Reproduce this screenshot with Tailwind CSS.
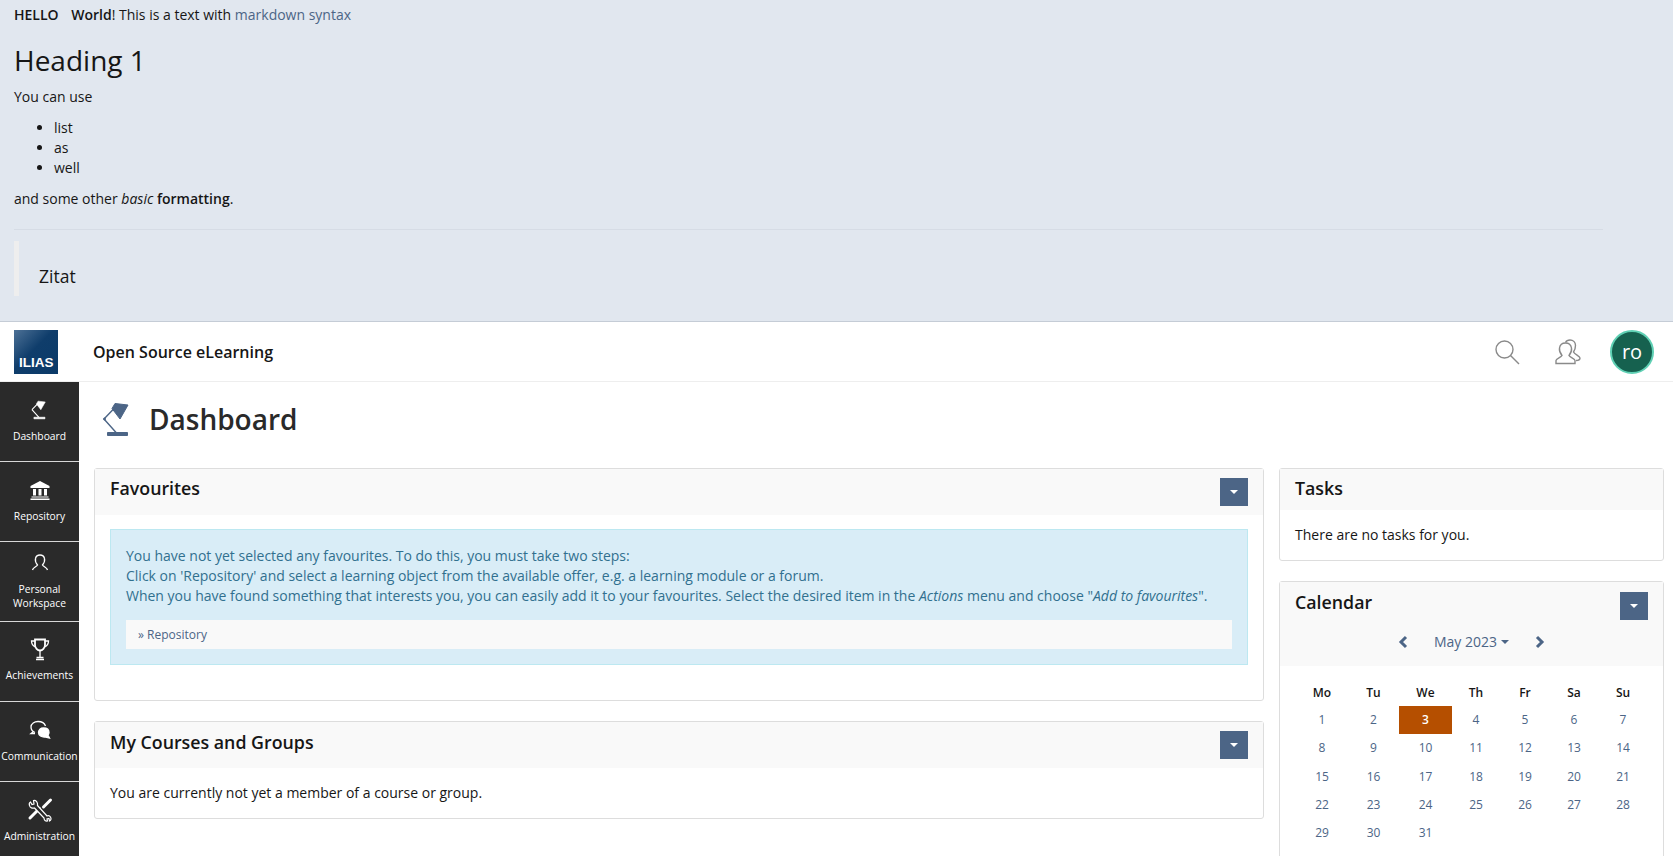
<!DOCTYPE html>
<html lang="en">
<head>
	<meta charset="UTF-8">
	<title>ILIAS Dashboard</title>
	<script src="https://cdn.jsdelivr.net/npm/@tailwindcss/browser@4"></script>
</head>
<body class="h-[856px] overflow-hidden bg-white font-['Open_Sans',sans-serif] text-[14px] leading-[20px] text-[#161616]">
	<!-- Markdown banner -->
	<section class="h-[322px] border-b border-[#c5ccd6] bg-[#e1e7ef] pl-[14px] pr-[70px] pt-[5px]">
		<p><b class="font-semibold mr-[9px]">HELLO</b> <b class="font-semibold">World</b>! This is a text with <a class="text-[#4c6586]">markdown syntax</a></p>
		<h1 class="mt-[19px] text-[28px] leading-[32px]">Heading 1</h1>
		<p class="mt-[11px]">You can use</p>
		<ul class="mt-[11px] list-disc pl-[40px]">
			<li>list</li>
			<li>as</li>
			<li>well</li>
		</ul>
		<p class="mt-[11px]">and some other <i>basic</i> <b class="font-semibold">formatting</b>.</p>
		<hr class="mt-[20px] border-[#d6dce5]">
		<blockquote class="mt-[11px] flex h-[55px] items-end border-l-[5px] border-[#eeeeee] pb-[8px] pl-[20px] text-[17.5px] leading-[24px]">Zitat</blockquote>
	</section>

	<!-- Top bar -->
	<header class="flex h-[60px] items-center border-b border-[#eeeeee] pl-[14px] pr-[19px]">
		<div class="relative h-[44px] w-[44px] bg-[linear-gradient(135deg,#4d7196_0%,#0f3d6b_45%,#0b3a68_100%)]">
			<span class="absolute bottom-[3px] left-[5px] font-['Liberation_Sans',sans-serif] text-[13.5px] font-bold leading-[16px] text-white">ILIAS</span>
		</div>
		<span class="ml-[35px] text-[16px] font-semibold">Open Source eLearning</span>
		<div class="ml-auto flex items-center">
			<svg class="h-[26px] w-[26px]" viewBox="0 0 26 26" fill="none" stroke="#8a8a8a" stroke-width="1.4"><circle cx="10.5" cy="10.5" r="8.5"/><path d="M16.5 16.5 L25 25"/></svg>
			<svg class="ml-[35px] h-[26px] w-[27px]" viewBox="0 0 27 26" fill="none" stroke="#8a8a8a" stroke-width="1.4"><path d="M1 24.5 V21.5 C1 19.5 6 18.5 7 16.5 C5 14 4 12 4.500 9 C5 5.500 8 4 10.500 4 C13.500 4 16 6 16.500 9 C17 12 16 14 14 16.500 C15 18.500 20 19.500 20 21.500 V24.500 Z"/><path d="M10.500 3.500 C11.500 1.500 13.500 1 15 1 C18 1 20.500 3 20.500 6.500 C20.500 9.500 19.500 11.500 18.500 13 C19.500 15.500 25 17 25 19 C25 21 23 21.500 21 21.500"/></svg>
			<div class="ml-[28px] flex h-[44px] w-[44px] items-center justify-center rounded-full border-2 border-[#5fd0b4] bg-[#16614f] text-[20px] text-white">ro</div>
		</div>
	</header>

	<div class="flex h-[474px]">
		<!-- Sidebar -->
		<nav class="w-[79px] shrink-0 overflow-hidden bg-[#2a2a2a] text-center text-[10.3px] leading-[14px] text-white">
			<a class="flex h-[80px] flex-col items-center justify-center border-b border-[#d8d8d8] pb-[4px]">
				<svg class="mb-[6px] h-[26px] w-[26px]" viewBox="-6 -5 43 47" fill="#ffffff" stroke="#ffffff"><path d="M12 2.500 L25 4 L17 18 L9 7.500 Z"/><path d="M1 18 L12 6.500 M1 18 L13.500 32" fill="none" stroke-width="2"/><path d="M4.500 31.500 H24.500 V34.500 H4.500 Z"/></svg>
				Dashboard
			</a>
			<a class="flex h-[80px] flex-col items-center justify-center border-b border-[#d8d8d8] pb-[4px]">
				<svg class="mb-[6px] h-[26px] w-[26px]" viewBox="0 0 26 26" fill="#ffffff"><path d="M13 4 L22.500 9 V11 H3.500 V9 Z"/><path d="M6 12 H9 V18.500 H6 Z M11.500 12 H14.500 V18.500 H11.500 Z M17 12 H20 V18.500 H17 Z M4.500 19.500 H21.500 V20.500 H4.500 Z M3.500 21.500 H22.500 V23 H3.500 Z"/></svg>
				Repository
			</a>
			<a class="flex h-[80px] flex-col items-center justify-center border-b border-[#d8d8d8] pb-[4px]">
				<svg class="mb-[6px] h-[26px] w-[26px]" viewBox="0 0 26 26" fill="none" stroke="#ffffff" stroke-width="1.300"><path d="M5.500 20 C6 17.500 9.500 17 10.500 15 C8.500 12.500 8 10.500 8.500 8.500 C9 6 11 5 13 5 C15 5 17 6 17.500 8.500 C18 10.500 17.500 12.500 15.500 15 C16.500 17 20 17.500 20.500 20"/></svg>
				Personal<br>Workspace
			</a>
			<a class="flex h-[80px] flex-col items-center justify-center border-b border-[#d8d8d8] pb-[5px]">
				<svg class="mb-[6px] h-[26px] w-[26px]" viewBox="0 0 26 26" fill="none" stroke="#ffffff" stroke-width="1.300"><path d="M8 3.500 H18 V9 C18 12 15.500 14.500 13 14.500 C10.500 14.500 8 12 8 9 Z" stroke-width="1.800"/><path d="M8 5 H4.500 C4.500 8.500 6 10 8.500 11 M18 5 H21.500 C21.500 8.500 20 10 17.500 11 M13 14.500 V21 M9.500 21.500 H16.500 M9 23.500 H17"/></svg>
				Achievements
			</a>
			<a class="flex h-[80px] flex-col items-center justify-center border-b border-[#d8d8d8] pb-[4px]">
				<svg class="mb-[6px] h-[26px] w-[26px]" viewBox="0 0 26 26" fill="none" stroke="#ffffff" stroke-width="1.300"><path d="M8 15.500 C5.500 14.500 4 12.500 4 10 C4 6.500 7.500 4.500 11 4.500 C14.500 4.500 17.500 6 18.500 9"/><path d="M6.500 14.500 L4 16.500 L8 16.500"/><path d="M16.500 11 C19.500 11 22 12.500 22 15.500 C22 16.500 21.500 17.500 21 18 L22.500 21 L18.500 20 C14.500 20.500 11.500 18.500 11.500 15.500 C11.500 13 13.500 11 16.500 11 Z" fill="#ffffff"/></svg>
				Communication
			</a>
			<a class="flex h-[80px] flex-col items-center justify-center pb-[5px]">
				<svg class="mb-[6px] h-[26px] w-[26px]" viewBox="0 0 26 26" fill="none" stroke="#ffffff"><path d="M16.500 10 L23.500 3" stroke-width="3" stroke-linecap="round"/><path d="M3 21 L12.500 11.500" stroke-width="3" stroke-linecap="round"/><path d="M10.500 8.500 L20 19 C21 18.500 22.500 18.500 23.500 20 C24.500 21.500 24 23.500 22.500 24 L22 21.500 L20 22 L20.500 24 C18.500 24.500 17 23 17 21 L7.500 11 C5.500 11.500 3 11 2.500 8.500 C2 7 2.500 5.500 3.500 5 L5 7.500 L7 7 L6.500 3.500 C9 3 11 5.500 10.500 8.500 Z" stroke-width="1.200" fill="#2a2a2a"/></svg>
				Administration
			</a>
		</nav>

		<!-- Content -->
		<main class="min-w-0 flex-1 pl-[15px] pr-[9px]">
			<div class="flex h-[86px] items-start pt-[19px]">
				<svg class="ml-[9px] h-[36px] w-[30px]" viewBox="0 0 30 36" fill="#4c6586" stroke="#4c6586"><path d="M12 2.500 L25 4 L17 18 L9 7.500 Z"/><path d="M1 18 L12 6.500 M1 18 L13.500 32" fill="none" stroke-width="1.400"/><circle cx="1.500" cy="18" r="1"/><path d="M4.500 31.500 H24.500 V34.500 H4.500 Z"/></svg>
				<h2 class="ml-[16px] mt-[1px] text-[28px] font-semibold leading-[34px] text-[#2a2a2a]">Dashboard</h2>
			</div>

			<div class="flex gap-[15px]">
				<div class="w-[1170px] shrink-0">
					<section class="h-[233px] rounded-[3px] border border-[#dddddd]">
						<div class="flex h-[46px] items-center justify-between bg-[#f9f9f9] pl-[15px] pr-[15px]">
							<h3 class="mt-[-9px] text-[17.8px] font-semibold leading-[22px]">Favourites</h3>
							<button class="flex h-[28px] w-[28px] items-center justify-center bg-[#4c6586]"><span class="h-0 w-0 border-x-[4px] border-t-[4px] border-x-transparent border-t-white"></span></button>
						</div>
						<div class="mx-[15px] mt-[14px] border border-[#bce8f1] bg-[#d9edf7] px-[15px] pt-[16px] text-[#31708f]">
							<p>You have not yet selected any favourites. To do this, you must take two steps:<br>Click on 'Repository' and select a learning object from the available offer, e.g. a learning module or a forum.<br>When you have found something that interests you, you can easily add it to your favourites. Select the desired item in the <i>Actions</i> menu and choose "<i>Add to favourites</i>".</p>
							<div class="mb-[15px] mt-[14px] flex h-[29px] items-center bg-[#f9f9f9] pl-[12px] text-[12px] text-[#4c6586]">» Repository</div>
						</div>
					</section>

					<section class="mt-[20px] h-[98px] rounded-[3px] border border-[#dddddd]">
						<div class="flex h-[46px] items-center justify-between bg-[#f9f9f9] pl-[15px] pr-[15px]">
							<h3 class="mt-[-7px] text-[17.8px] font-semibold leading-[22px]">My Courses and Groups</h3>
							<button class="flex h-[28px] w-[28px] items-center justify-center bg-[#4c6586]"><span class="h-0 w-0 border-x-[4px] border-t-[4px] border-x-transparent border-t-white"></span></button>
						</div>
						<p class="pl-[15px] pt-[15px]">You are currently not yet a member of a course or group.</p>
					</section>
				</div>

				<div class="min-w-0 flex-1">
					<section class="h-[93px] rounded-[3px] border border-[#dddddd]">
						<div class="flex h-[41px] items-center bg-[#f9f9f9] pl-[15px]">
							<h3 class="mt-[-4px] text-[17.8px] font-semibold leading-[22px]">Tasks</h3>
						</div>
						<p class="pl-[15px] pt-[15px]">There are no tasks for you.</p>
					</section>

					<section class="mt-[20px] h-[300px] rounded-[3px] border border-[#dddddd]">
						<div class="h-[84px] bg-[#f9f9f9]">
							<div class="flex h-[47px] items-center justify-between pl-[15px] pr-[15px]">
								<h3 class="mt-[-8px] text-[17.8px] font-semibold leading-[22px]">Calendar</h3>
								<button class="flex h-[28px] w-[28px] items-center justify-center bg-[#4c6586]"><span class="h-0 w-0 border-x-[4px] border-t-[4px] border-x-transparent border-t-white"></span></button>
							</div>
							<div class="flex h-[26px] items-center justify-center text-[#4c6586]">
								<svg class="mr-[26px] h-[14px] w-[10px]" viewBox="0 0 10 14" fill="none" stroke="#4c6586" stroke-width="3"><path d="M8 2 L3 7 L8 12"/></svg>
								<span class="text-[14px]">May 2023</span>
								<span class="ml-[4px] h-0 w-0 border-x-[4px] border-t-[4px] border-x-transparent border-t-[#4c6586]"></span>
								<svg class="ml-[26px] h-[14px] w-[10px]" viewBox="0 0 10 14" fill="none" stroke="#4c6586" stroke-width="3"><path d="M2 2 L7 7 L2 12"/></svg>
							</div>
						</div>
						<table class="ml-[16px] mt-[14px] w-[352px] table-fixed text-center text-[12px] text-[#4c6586]">
							<thead class="text-[#161616]">
								<tr class="h-[26px]"><th class="w-[52px] font-semibold">Mo</th><th class="w-[51px] font-semibold">Tu</th><th class="w-[53px] font-semibold">We</th><th class="w-[48px] font-semibold">Th</th><th class="w-[50px] font-semibold">Fr</th><th class="w-[48px] font-semibold">Sa</th><th class="w-[50px] font-semibold">Su</th></tr>
							</thead>
							<tbody>
								<tr class="h-[28px]"><td>1</td><td>2</td><td class="bg-[#b54f00] font-semibold text-white">3</td><td>4</td><td>5</td><td>6</td><td>7</td></tr>
								<tr class="h-[28px]"><td>8</td><td>9</td><td>10</td><td>11</td><td>12</td><td>13</td><td>14</td></tr>
								<tr class="h-[29px]"><td>15</td><td>16</td><td>17</td><td>18</td><td>19</td><td>20</td><td>21</td></tr>
								<tr class="h-[28px]"><td>22</td><td>23</td><td>24</td><td>25</td><td>26</td><td>27</td><td>28</td></tr>
								<tr class="h-[28px]"><td>29</td><td>30</td><td>31</td><td></td><td></td><td></td><td></td></tr>
							</tbody>
						</table>
					</section>
				</div>
			</div>
		</main>
	</div>
</body>
</html>
